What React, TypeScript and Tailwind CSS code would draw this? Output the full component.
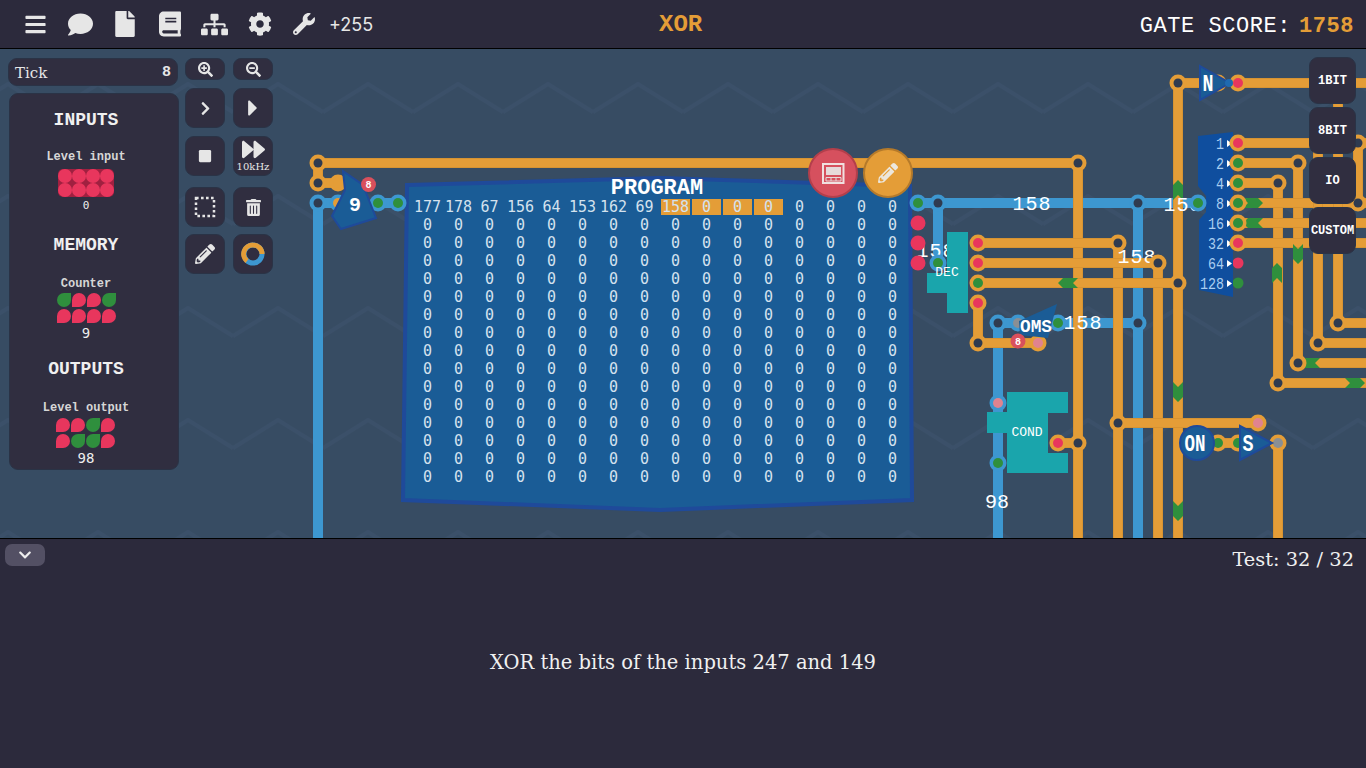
import React from "react";
import {
  FaBars, FaComment, FaFile, FaBook, FaSitemap, FaCog, FaWrench, FaSearchPlus, FaSearchMinus,
  FaChevronRight, FaCaretRight, FaStop, FaForward, FaTrashAlt, FaPencilAlt, FaChevronDown,
} from "react-icons/fa";

const OR = "#e49d37";
const BL = "#3d97d0";
const RED = "#e8365d";
const GR = "#2f8f3d";
const HOLE = "#2f3b50";
const PINK = "#e0838f";
const GRAY = "#8a8f94";

type L = [number, number, number, number];
const blueWires: L[] = [
  [318, 203, 318, 538], [318, 203, 345, 203], [378, 203, 398, 203], [918, 203, 1198, 203], [938, 203, 938, 263],
  [1138, 203, 1138, 538], [998, 323, 1138, 323], [998, 323, 998, 538],
];
const orangeWires: L[] = [
  [318, 163, 1078, 163], [1078, 163, 1078, 538], [318, 163, 318, 183], [318, 183, 345, 183],
  [978, 243, 1118, 243], [1118, 243, 1118, 538], [978, 263, 1158, 263], [1158, 263, 1158, 538],
  [978, 283, 1178, 283], [1178, 83, 1178, 538], [978, 303, 978, 343], [978, 343, 1038, 343],
  [1058, 443, 1078, 443], [1118, 423, 1258, 423], [1218, 443, 1238, 443], [1278, 443, 1278, 538],
  [1178, 83, 1208, 83], [1238, 83, 1366, 83], [1238, 143, 1366, 143], [1238, 163, 1298, 163],
  [1298, 163, 1298, 363], [1238, 183, 1278, 183], [1278, 183, 1278, 383], [1278, 383, 1366, 383],
  [1298, 363, 1366, 363], [1238, 203, 1366, 203], [1238, 223, 1366, 223], [1238, 243, 1366, 243],
  [1318, 143, 1318, 343], [1318, 343, 1366, 343], [1338, 83, 1338, 323], [1338, 323, 1366, 323],
  [1358, 143, 1358, 203],
];
const orangeJunctions = [
  [318, 163], [318, 183], [1078, 163], [1118, 243], [1158, 263], [1178, 283], [978, 343], [1078, 443], [1118, 423],
  [1178, 83], [1298, 163], [1278, 183], [1298, 363], [1278, 383], [1318, 343], [1338, 323], [1358, 203], [1358, 143],
];
const blueJunctions = [[318, 203], [938, 203], [1138, 203], [998, 323], [1138, 323]];
const pins: [number, number, string, string][] = [
  [978, 243, OR, RED], [978, 263, OR, RED], [978, 283, OR, GR], [978, 303, OR, RED], [1058, 443, OR, RED],
  [1238, 83, OR, RED], [1218, 443, OR, GR], [1238, 443, OR, GR], [1278, 443, OR, GRAY],
  [1258, 423, OR, PINK], [1038, 343, OR, PINK], [338, 183, OR, OR], [1218, 83, OR, GR],
  [918, 203, BL, GR], [378, 203, BL, GR], [398, 203, BL, GR], [938, 263, BL, GR], [998, 463, BL, GR],
  [1058, 323, BL, GR], [998, 403, BL, PINK], [1018, 323, BL, GRAY], [338, 203, BL, OR],
];
const bare: [number, number, string][] = [
  [918, 223, RED], [918, 243, RED], [918, 263, RED], [1238, 263, RED], [1238, 283, GR],
];
const markers: [number, number, number][] = [
  [1178, 190, 0], [1178, 392, 180], [1178, 511, 180], [1277, 273, 0], [1298, 254, 180],
  [1068, 283, 270], [1253, 223, 270], [1310, 363, 270], [1253, 203, 90], [1355, 383, 90],
];
const decoder = ["1", "2", "4", "8", "16", "32", "64", "128"];
const firstRow = ["177", "178", "67", "156", "64", "153", "162", "69", "158", "0", "0", "0", "0", "0", "0", "0"];

function Circuit() {
  return (
    <svg viewBox="0 49 1366 489" width={1366} height={489} className="absolute inset-0 font-['Liberation_Mono',monospace]">
      <defs>
        <pattern id="zig" x="53" y="49" width="90" height="112" patternUnits="userSpaceOnUse">
          <polyline points="0,63 45,35 90,63" fill="none" stroke="#3b5069" strokeWidth="4" />
        </pattern>
      </defs>
      <rect x="0" y="49" width="1366" height="489" fill="#374c63" />
      <rect x="0" y="49" width="1366" height="489" fill="url(#zig)" />

      {blueWires.map(([a, b, c, d], i) => (
        <line key={i} x1={a} y1={b} x2={c} y2={d} stroke={BL} strokeWidth="10" />
      ))}
      {orangeWires.map(([a, b, c, d], i) => (
        <g key={i}>
          <line x1={a} y1={b} x2={c} y2={d} stroke="#c9892f" strokeWidth="10" />
          <line x1={a} y1={b} x2={c} y2={d} stroke={OR} strokeWidth="9" />
        </g>
      ))}
      {markers.map(([x, y, r], i) => (
        <polygon key={i} transform={`translate(${x} ${y}) rotate(${r})`} points="0,-10 5,-5 5,10 0,5 -5,10 -5,-5" fill={GR} />
      ))}

      <polygon points="407,185 660,178 910,186 912,500 660,510 403,500" fill="#1a5c96" stroke="#1f4a9a" strokeWidth="4" />

      <g fill="white" fontSize="20" textAnchor="middle">
        <text x="1032" y="210" letterSpacing="1">158</text>
        <text x="1137" y="263" letterSpacing="1">158</text>
        <text x="1083" y="329" letterSpacing="1">158</text>
        <text x="1183" y="211" letterSpacing="1">158</text>
        <text x="936" y="257" letterSpacing="1">158</text>
        <text x="997" y="508">98</text>
      </g>

      {orangeJunctions.map(([x, y], i) => (
        <g key={i}>
          <circle cx={x} cy={y} r="8.5" fill={OR} />
          <circle cx={x} cy={y} r="4.5" fill={HOLE} />
        </g>
      ))}
      {blueJunctions.map(([x, y], i) => (
        <g key={i}>
          <circle cx={x} cy={y} r="8.5" fill={BL} />
          <circle cx={x} cy={y} r="4.5" fill={HOLE} />
        </g>
      ))}
      {pins.map(([x, y, c, d], i) => (
        <g key={i}>
          <circle cx={x} cy={y} r="8.5" fill={c} />
          <circle cx={x} cy={y} r="5" fill={d} />
        </g>
      ))}
      {bare.map(([x, y, c], i) => (
        <circle key={i} cx={x} cy={y} r={x > 1000 ? 5.5 : 7.5} fill={c} />
      ))}

      <polygon points="343,171 363,185 376,218 341,229 332,216 345,190" fill="#1a5c96" stroke="#1f4a9a" strokeWidth="2" />
      <text x="355" y="211" fill="white" fontSize="20" fontWeight="700" textAnchor="middle">9</text>
      <circle cx="368.500" cy="184.500" r="7.500" fill="#d9505c" />
      <text x="368.500" y="188" fill="white" fontSize="10" fontWeight="700" textAnchor="middle">8</text>

      <path d="M947 232H968V313H947V293H927V273H947Z" fill="#1aa5ac" />
      <text x="947" y="276" fill="white" fontSize="13" textAnchor="middle">DEC</text>
      <path d="M1007 392H1068V413H1048V453H1068V473H1007V433H987V412H1007Z" fill="#1aa5ac" />
      <text x="1027" y="436" fill="white" fontSize="13" textAnchor="middle">COND</text>

      <polygon points="1057,304 1019,321 1020,335 1048,338" fill="#1a5c96" />
      <text x="1036" y="332" fill="white" fontSize="18" fontWeight="700" textAnchor="middle" textLength="32" lengthAdjust="spacingAndGlyphs">OMS</text>
      <circle cx="1018" cy="341" r="7.500" fill="#d9505c" />
      <text x="1018" y="344.500" fill="white" fontSize="10" fontWeight="700" textAnchor="middle">8</text>

      <polygon points="1200,66 1230,83 1200,100" fill="#1a5c96" stroke="#1f4a9a" strokeWidth="2" />
      <circle cx="1229" cy="83" r="4" fill="#1f6ab0" />
      <text x="1208" y="91" fill="white" fontSize="23" fontWeight="700" textAnchor="middle" textLength="11" lengthAdjust="spacingAndGlyphs">N</text>

      <circle cx="1197" cy="443" r="17" fill="#1a5c96" stroke="#1f4a9a" strokeWidth="2" />
      <text x="1195" y="451" fill="white" fontSize="23" fontWeight="700" textAnchor="middle" textLength="21" lengthAdjust="spacingAndGlyphs">ON</text>

      <polygon points="1240,426 1272,443 1240,460" fill="#1a5c96" stroke="#1f4a9a" strokeWidth="2" />
      <text x="1248" y="451" fill="white" fontSize="23" fontWeight="700" textAnchor="middle" textLength="11" lengthAdjust="spacingAndGlyphs">S</text>

      <path d="M1198 136L1233 132V297L1199 290V220L1206 212V196L1198 186Z" fill="#0f4e9e" />
      <circle cx="1198" cy="203" r="8.5" fill={BL} />
      <circle cx="1198" cy="203" r="5" fill={GR} />
      {decoder.map((t, i) => (
        <g key={t}>
          <text x="1224" y={149 + i * 20} fill="#a9cdf0" fontSize="16" textAnchor="end" textLength={t.length * 8} lengthAdjust="spacingAndGlyphs">{t}</text>
          <polygon points={`${1227},${140 + i * 20} ${1232},${143.5 + i * 20} ${1227},${147 + i * 20}`} fill="white" />
        </g>
      ))}
      {[[1238, 143, RED], [1238, 163, GR], [1238, 183, GR], [1238, 203, GR], [1238, 223, GR], [1238, 243, RED]].map(([x, y, c], i) => (
        <g key={i}>
          <circle cx={x as number} cy={y as number} r="8.5" fill={OR} />
          <circle cx={x as number} cy={y as number} r="5" fill={c as string} />
        </g>
      ))}

      <circle cx="833" cy="173" r="24" fill="#d6505e" stroke="#b33f4b" strokeWidth="2" />
      <rect x="823" y="164" width="20.500" height="19" fill="none" stroke="#f0e0e0" strokeWidth="2" />
      <rect x="826" y="167" width="15" height="8" fill="#e6d9da" />
      <path d="M826 177.500H841V181H826ZM831 177V181M836 177V181" fill="none" stroke="#e6d9da" strokeWidth="1" />
      <circle cx="888" cy="173" r="24" fill={OR} stroke="#b57a2a" strokeWidth="2" />
      <FaPencilAlt x={878} y={163} size={20} color="#ece7dd" />
    </svg>
  );
}

function ProgramGrid() {
  return (
    <div className="absolute left-[412px] top-[131px] font-['DejaVu_Sans_Mono',monospace] text-[15px] leading-[18px] text-[#d4e2ee]">
      <div className="w-[490px] text-center font-['Liberation_Mono',monospace] text-[22px] font-bold leading-[18px] text-white">
        PROGRAM
      </div>
      <div className="grid w-[496px] grid-cols-[repeat(16,31px)] auto-rows-[18px] pl-0">
        {firstRow.map((v, i) => (
          <div key={i} className={i >= 8 && i <= 11 ? "ml-[1px] mr-[1px] mt-[1px] h-[16px] bg-[#e49d37] text-center leading-[16px]" : "text-center"}>
            {v}
          </div>
        ))}
        {Array.from({ length: 240 }).map((_, i) => (
          <div key={i} className="text-center">0</div>
        ))}
      </div>
    </div>
  );
}

function Leds({ rows }: { rows: string[] }) {
  return (
    <div className="flex flex-col items-center gap-[2px]">
      {rows.map((r, i) => (
        <div key={i} className="flex gap-px">
          {r.split("").map((c, j) => (
            <div
              key={j}
              className={c === "G" ? "h-[14px] w-[14px] rounded-full rounded-tr-none bg-[#2f8f3d]" : "h-[14px] w-[14px] rounded-full rounded-bl-none bg-[#e8365d]"}
            />
          ))}
        </div>
      ))}
    </div>
  );
}

function TileBtn({ children, extra = "" }: { children: React.ReactNode; extra?: string }) {
  return (
    <div className={`flex h-10 w-10 flex-col items-center justify-center rounded-[9px] border border-[#2a3346] bg-[#302e40] text-[#e6e6e6] ${extra}`}>
      {children}
    </div>
  );
}

function Side({ t }: { t: string }) {
  return (
    <div className="flex h-[47px] w-[47px] items-center justify-center rounded-[9px] border border-[#2a3346] bg-[#302e40] text-[12px] font-bold text-white">
      {t}
    </div>
  );
}

export default function App() {
  return (
    <div className="flex h-screen w-screen flex-col overflow-hidden bg-[#2c2a3c] font-['Liberation_Mono',monospace]">
      <header className="relative flex h-[49px] shrink-0 items-center border-b border-black bg-[#2c2a3c] pl-6 pr-3 text-[#e6e6e6]">
        <div className="flex items-center">
          <FaBars size={23} className="mr-[21px]" />
          <FaComment size={25} className="mr-[21px]" />
          <FaFile size={22} className="ml-0 mr-[23px] h-[26px]" />
          <FaBook size={22} className="mr-[20px] h-[26px]" />
          <FaSitemap size={27} className="mr-[20px]" />
          <FaCog size={24} className="mr-[21px]" />
          <FaWrench size={22} className="mr-[14px]" />
          <span className="pt-[2px] font-['Inter',sans-serif] text-[18px] leading-none">+255</span>
        </div>
        <div className="absolute left-[659px] top-[11px] text-[24px] font-bold leading-[28px] text-[#e49d37]">XOR</div>
        <div className="ml-auto pt-[6px] text-[22px] leading-[26px] tracking-[0.55px] text-white">
          GATE SCORE:<span className="ml-[8px] font-bold text-[#e49d37]">1758</span>
        </div>
      </header>

      <main className="relative h-[489px] shrink-0 overflow-hidden">
        <Circuit />
        <ProgramGrid />

        <div className="absolute left-2 top-[9px] flex gap-[6px]">
          <div className="flex w-[171px] flex-col gap-[7px]">
            <div className="flex h-7 w-[170px] items-center justify-between rounded-[9px] border border-[#2a3346] bg-[#302e40] px-[6px] pt-[2px] text-[#e6e6e6]">
              <span className="font-['DejaVu_Serif',serif] text-[15px]">Tick</span>
              <span className="text-[15px] font-bold">8</span>
            </div>
            <div className="ml-px flex h-[377px] w-[170px] flex-col items-center rounded-[9px] border border-[#2a3346] bg-[#302e40] pr-4 pt-[14px] text-center">
              <section className="flex h-[125px] flex-col items-center">
                <h2 className="h-6 text-[18px] font-bold leading-6 text-[#f0f0f0]">INPUTS</h2>
                <p className="mt-[19px] h-[13px] text-[12px] font-bold leading-[13px] text-[#d6d6d6]">Level input</p>
                <div className="mt-[5px] flex flex-col rounded-[5px] bg-[#a02040]">
                  {[0, 1].map((r) => (
                    <div key={r} className="flex">
                      {[0, 1, 2, 3].map((c) => (
                        <div key={c} className="h-[14px] w-[14px] rounded-full bg-[#e8365d]" />
                      ))}
                    </div>
                  ))}
                </div>
                <p className="mt-[2px] font-['DejaVu_Sans_Mono',monospace] text-[11px] leading-[14px] text-[#eeeeee]">0</p>
              </section>
              <section className="flex h-[125px] flex-col items-center">
                <h2 className="h-6 text-[18px] font-bold leading-6 text-[#f0f0f0]">MEMORY</h2>
                <p className="mt-[21px] h-[13px] text-[12px] font-bold leading-[13px] text-[#d6d6d6]">Counter</p>
                <div className="mt-[2px]"><Leds rows={["GRRG", "RRRR"]} /></div>
                <p className="mt-[2px] font-['DejaVu_Sans_Mono',monospace] text-[14px] leading-[16px] text-[#eeeeee]">9</p>
              </section>
              <section className="flex h-[112px] flex-col items-center">
                <h2 className="h-6 text-[18px] font-bold leading-6 text-[#f0f0f0]">OUTPUTS</h2>
                <p className="mt-[21px] h-[13px] text-[12px] font-bold leading-[13px] text-[#d6d6d6]">Level output</p>
                <div className="mt-[3px]"><Leds rows={["RRGR", "RGGR"]} /></div>
                <p className="mt-[2px] font-['DejaVu_Sans_Mono',monospace] text-[14px] leading-[16px] text-[#eeeeee]">98</p>
              </section>
            </div>
          </div>

          <div className="flex flex-col">
            <div className="flex gap-[8px]">
              <div className="flex h-[22px] w-10 items-center justify-center rounded-[8px] border border-[#2a3346] bg-[#302e40] text-[#e6e6e6]"><FaSearchPlus size={15} /></div>
              <div className="flex h-[22px] w-10 items-center justify-center rounded-[8px] border border-[#2a3346] bg-[#302e40] text-[#e6e6e6]"><FaSearchMinus size={15} /></div>
            </div>
            <div className="mt-2 flex gap-[8px]">
              <TileBtn><FaChevronRight size={15} /></TileBtn>
              <TileBtn><FaCaretRight size={26} /></TileBtn>
            </div>
            <div className="mt-2 flex gap-[8px]">
              <TileBtn><FaStop size={14} /></TileBtn>
              <TileBtn>
                <FaForward size={23} className="-mt-[3px]" />
                <span className="font-['DejaVu_Serif',serif] text-[10px] leading-[11px]">10kHz</span>
              </TileBtn>
            </div>
            <div className="mt-[11px] flex gap-[8px]">
              <TileBtn>
                <svg width="22" height="22" viewBox="0 0 22 22">
                  <rect x="2" y="2" width="18" height="18" fill="none" stroke="#e6e6e6" strokeWidth="2.500" strokeDasharray="2.600 2.400" />
                </svg>
              </TileBtn>
              <TileBtn><FaTrashAlt size={17} /></TileBtn>
            </div>
            <div className="mt-[7px] flex gap-[8px]">
              <TileBtn><FaPencilAlt size={20} /></TileBtn>
              <TileBtn>
                <svg width="24" height="24" viewBox="0 0 24 24" fill="none" strokeWidth="5">
                  <circle cx="12" cy="12" r="9" stroke="#3d97d0" />
                  <path d="M21 12A9 9 0 0 0 12 3A9 9 0 0 0 6 19" stroke="#e49d37" />
                </svg>
              </TileBtn>
            </div>
          </div>
        </div>

        <div className="absolute left-[1309px] top-2 flex flex-col gap-[3px]">
          <Side t="1BIT" />
          <Side t="8BIT" />
          <Side t="IO" />
          <Side t="CUSTOM" />
        </div>
      </main>

      <section className="relative flex-1 border-t border-black bg-[#2c2a3c] font-['DejaVu_Serif',serif] text-[#f0f0f0]">
        <div className="absolute left-[5px] top-[5px] flex h-[22px] w-10 items-center justify-center rounded-[7px] bg-[#535064] text-[#eeeeee]">
          <FaChevronDown size={14} />
        </div>
        <div className="flex justify-end pr-3 pt-[9px] text-[19.400px] leading-6">Test: 32 / 32</div>
        <p className="mt-[77px] text-center text-[19.500px] leading-7">XOR the bits of the inputs 247 and 149</p>
      </section>
    </div>
  );
}
